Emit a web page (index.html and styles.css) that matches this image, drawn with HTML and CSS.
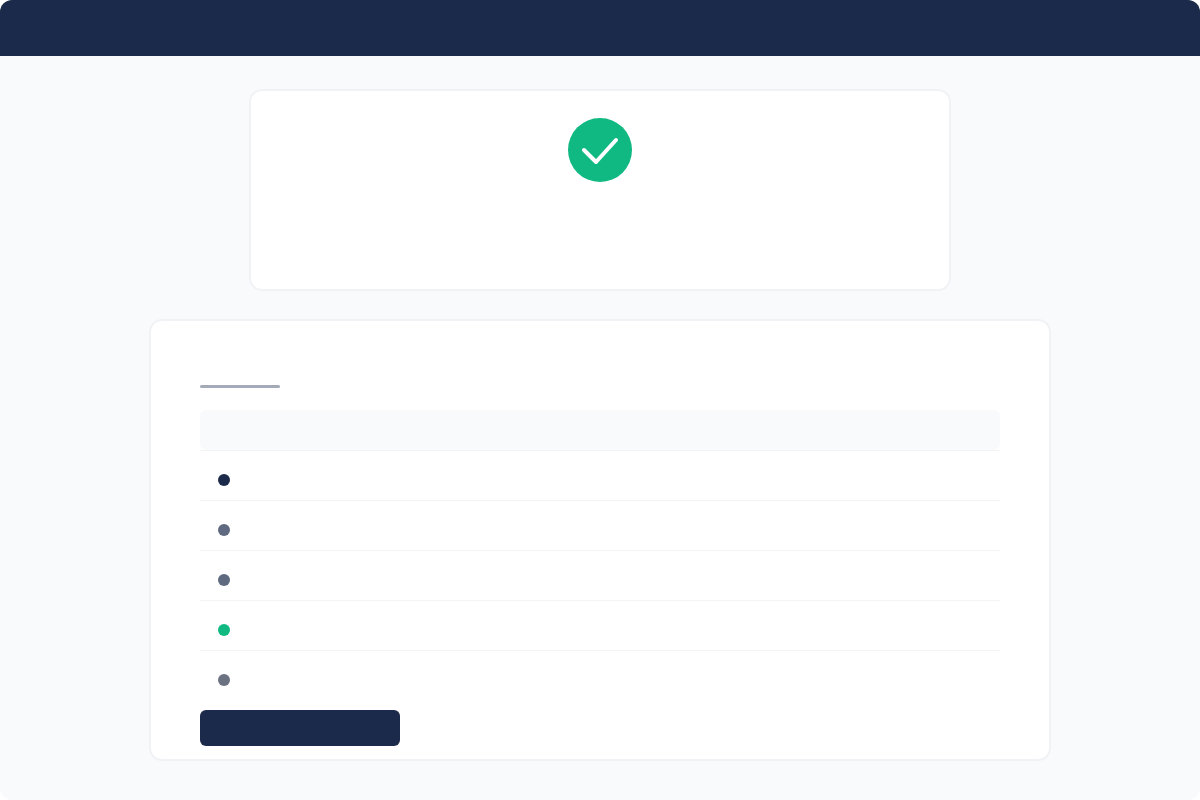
FILE: index.html
```html
<!DOCTYPE html>
<html lang="en">
<head>
    <meta charset="UTF-8">
    <meta name="viewport" content="width=device-width, initial-scale=1.0">
    <link rel="stylesheet" href="styles.css">
</head>
<body>
    <div class="page">
        <header class="topbar"></header>

        <main class="content">
            <section class="card status-card">
                <svg class="status-icon" viewBox="0 0 64 64" aria-hidden="true">
                    <circle cx="32" cy="32" r="32" fill="#10b981"/>
                    <path d="M16 32 L28 44 L48 22" fill="none" stroke="#ffffff" stroke-width="4" stroke-linecap="round" stroke-linejoin="round"/>
                </svg>
            </section>

            <section class="card details-card">
                <div class="title-line"></div>
                <table class="steps">
                    <thead>
                        <tr><th></th></tr>
                    </thead>
                    <tbody>
                        <tr><td><span class="dot dot-navy"></span></td></tr>
                        <tr><td><span class="dot dot-muted"></span></td></tr>
                        <tr><td><span class="dot dot-muted"></span></td></tr>
                        <tr><td><span class="dot dot-green"></span></td></tr>
                        <tr><td><span class="dot dot-gray"></span></td></tr>
                    </tbody>
                </table>
                <button type="button" class="action"></button>
            </section>
        </main>
    </div>
</body>
</html>
```
FILE: styles.css
```css
* {
    box-sizing: border-box;
}
body {
    margin: 0;
    background-color: white;
    font-family: "Liberation Sans", Arial, sans-serif;
}
.page {
    min-height: 100vh;
    background-color: #f9fafc;
    border-radius: 12px;
    overflow: hidden;
}
.topbar {
    height: 56px;
    background-color: #1b2a4a;
}
.content {
    display: flex;
    flex-direction: column;
    align-items: center;
    gap: 28px;
    padding: 33px 20px 39px;
}
.card {
    width: 100%;
    background-color: white;
    border: 2px solid #f0f2f5;
    border-radius: 13px;
}
.status-card {
    max-width: 702px;
    min-height: 202px;
    padding: 27px;
    text-align: center;
}
.status-icon {
    width: 64px;
    height: 64px;
}
.details-card {
    max-width: 902px;
    padding: 64px 49px 13px;
}
.title-line {
    width: 80px;
    height: 3px;
    margin-bottom: 22px;
    background-color: #a4aab7;
    border-radius: 2px;
}

/* steps table */
.steps {
    width: 100%;
    border-spacing: 0;
}
.steps th {
    height: 40px;
    padding: 0;
    background-color: #f9fafc;
    border-radius: 6px;
}
.steps td {
    height: 50px;
    padding: 9px 18px 0;
    border-top: 1px solid #f3f4f6;
}
.dot {
    display: block;
    width: 12px;
    height: 12px;
    border-radius: 50%;
}
.dot-navy {
    background-color: #1b2a4a;
}
.dot-muted {
    background-color: #5f6a80;
}
.dot-green {
    background-color: #10b981;
}
.dot-gray {
    background-color: #6b7280;
}

.action {
    display: block;
    width: 200px;
    height: 36px;
    margin-top: 10px;
    background-color: #1b2a4a;
    border: none;
    border-radius: 6px;
    cursor: pointer;
}
```
